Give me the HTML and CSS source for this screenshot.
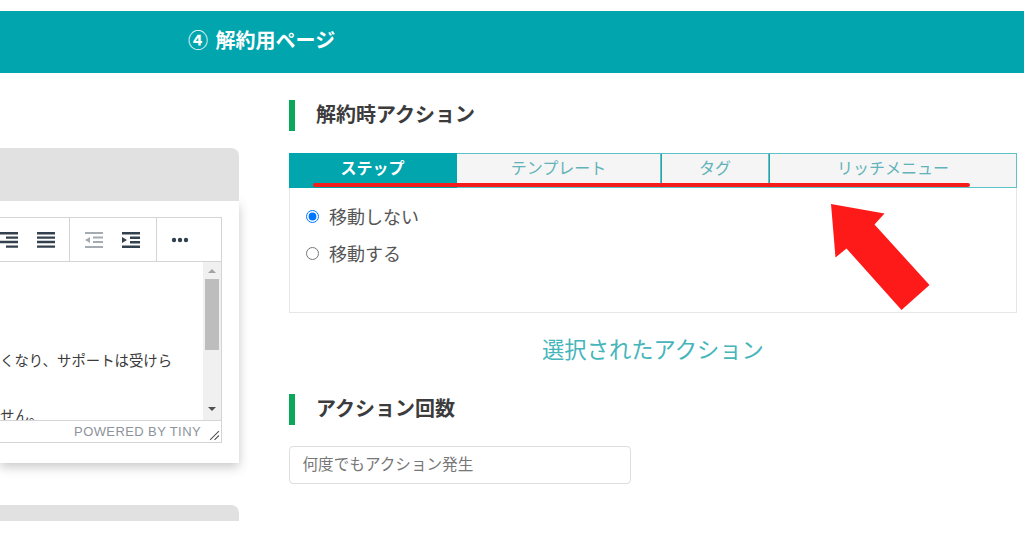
FILE: index.html
```html
<!DOCTYPE html>
<html lang="ja">
<head>
<meta charset="utf-8">
<title>解約用ページ</title>
<link rel="stylesheet" href="styles.css">
</head>
<body>
<header class="banner"><h1 class="banner-title">④ 解約用ページ</h1></header>
<main class="layout">
  <section class="left">
    <div class="card">
      <div class="card-head"></div>
      <div class="card-body">
        <div class="editor">
          <div class="toolbar">
            <div class="tool-group group-align">
              <svg class="icon" viewBox="0 0 18 18"><path d="M-2 1h20v2.400H-2zM6 5.400h12v2.400H6zM-2 9.800h20v2.400H-2zM6 14.400h12v2.400H6z"/></svg>
              <svg class="icon" viewBox="0 0 18 18"><path d="M0 1h18v2.400H0zM0 5.400h18v2.400H0zM0 9.800h18v2.400H0zM0 14.400h18v2.400H0z"/></svg>
            </div>
            <div class="tool-group group-indent">
              <svg class="icon icon-off" viewBox="0 0 18 18"><path d="M0 1h18v2H0zM8 5.500h10v2H8zM8 10h10v2H8zM0 15h18v2H0zM5 6v6L0 9z"/></svg>
              <svg class="icon" viewBox="0 0 18 18"><path d="M0 1h18v2.400H0zM8 5.500h10v2.400H8zM8 10h10v2.400H8zM0 14.600h18v2.400H0zM0 6v6l5-3z"/></svg>
            </div>
            <div class="tool-group group-more">
              <svg class="icon" viewBox="0 0 18 18"><circle cx="3" cy="9" r="2.200"/><circle cx="9" cy="9" r="2.200"/><circle cx="15" cy="9" r="2.200"/></svg>
            </div>
          </div>
          <div class="edit-area">
            <div class="edit-text">
              <p class="line-one">くなり、サポートは受けら</p>
              <p class="line-two">せん。</p>
            </div>
            <div class="scrollbar">
              <span class="arrow-up"></span>
              <span class="thumb"></span>
              <span class="arrow-down"></span>
            </div>
          </div>
          <div class="statusbar">
            <span>POWERED BY TINY</span>
            <svg class="grip" viewBox="0 0 10 10"><path d="M9 1 1 9M9 5 5 9"/></svg>
          </div>
        </div>
      </div>
    </div>
    <div class="card-next"></div>
  </section>
  <section class="right">
    <h2 class="heading">解約時アクション</h2>
    <div class="tabs">
      <div class="tab tab-active">ステップ</div>
      <div class="tab">テンプレート</div>
      <div class="tab">タグ</div>
      <div class="tab">リッチメニュー</div>
      <span class="red-line"></span>
    </div>
    <div class="panel">
      <label class="radio-row"><input type="radio" name="move" checked>移動しない</label>
      <label class="radio-row"><input type="radio" name="move">移動する</label>
      <svg class="red-arrow" viewBox="0 0 100 109"><polygon points="0,0 53.500,9.500 43.500,20.500 98.500,81 70.500,106 15.500,44.500 4.500,53.500"/></svg>
    </div>
    <h3 class="action-title">選択されたアクション</h3>
    <h2 class="heading">アクション回数</h2>
    <div class="select-box">何度でもアクション発生</div>
  </section>
</main>
</body>
</html>
```

FILE: styles.css
```css
* { box-sizing: border-box; }
html, body { margin: 0; height: 538px; overflow: hidden; background: #fff; }
body {
  padding-top: 11px;
  font-family: "Noto Sans CJK JP", "Liberation Sans", sans-serif;
  color: #444;
}
h1, h2, h3, p { margin: 0; }

.banner {
  height: 62px;
  background: #00a5ad;
  display: flex;
  align-items: center;
  padding: 0 0 5px 188px;
}
.banner-title { font-size: 20px; font-weight: 700; color: #fff; line-height: 1; word-spacing: 3px; }

.layout { display: grid; grid-template-columns: 239px 728px; column-gap: 50px; }

/* left column */
.left { padding-top: 75px; }
.card-head { position: relative; height: 53px; background: #e1e1e1; border-radius: 0 8px 0 0; }
.card-body { height: 262px; background: #fff; padding-top: 16px; box-shadow: 0 4px 10px rgba(60, 60, 70, .28); }
.card-next { height: 16px; margin-top: 42px; background: #e1e1e1; border-radius: 0 8px 0 0; }

.editor {
  width: 222px;
  height: 226px;
  border: solid #d4d4d4;
  border-width: 1px 1px 1px 0;
  display: flex;
  flex-direction: column;
}
.toolbar { height: 44px; flex: none; display: flex; justify-content: flex-end; border-bottom: 1px solid #d4d4d4; }
.tool-group { display: flex; align-items: center; gap: 19px; height: 100%; }
.group-align { padding-right: 14px; }
.group-indent { border-left: 1px solid #d4d4d4; padding: 0 16px 0 15px; }
.group-more { border-left: 1px solid #d4d4d4; padding: 0 32px 0 14px; }
.icon { width: 18px; height: 18px; fill: #33414f; flex: none; overflow: visible; }
.icon-off { fill: #a4abb2; }

.edit-area { flex: 1; min-height: 0; display: flex; overflow: hidden; border-bottom: 1px solid #d4d4d4; }
.edit-text { flex: 1; font-size: 14.4px; line-height: 20px; color: #3a3a3a; white-space: nowrap; }
.line-one { margin-top: 88px; }
.line-two { margin-top: 35px; }

.scrollbar { width: 18px; background: #f0f0f0; display: flex; flex-direction: column; align-items: center; flex: none; }
.arrow-up { margin-top: 7px; border: 4px solid transparent; border-top: 0; border-bottom: 4px solid #a3a3a3; }
.thumb { width: 14px; height: 71px; margin-top: 6px; background: #bdbdbd; }
.arrow-down { margin-top: 57px; border: 4px solid transparent; border-bottom: 0; border-top: 4px solid #505050; }

.statusbar {
  height: 21px;
  flex: none;
  display: flex;
  align-items: center;
  justify-content: flex-end;
  gap: 8px;
  padding-right: 1px;
  font-size: 13px;
  letter-spacing: .4px;
  color: #8d939a;
  font-family: "Liberation Sans", sans-serif;
}
.grip { width: 11px; height: 11px; margin-top: 7px; fill: none; stroke: #555; stroke-width: 1; }

/* right column */
.right { padding-top: 27px; }
.heading {
  height: 31px;
  border-left: 6px solid #0aa75a;
  padding-left: 21px;
  font-size: 20px;
  line-height: 27px;
  font-weight: 700;
  color: #3c3c3c;
}
.tabs {
  position: relative;
  margin-top: 22px;
  height: 35px;
  display: grid;
  grid-template-columns: 168px 204px 108px 248px;
}
.tab {
  background: #f5f5f5;
  border: 1px solid #5cc3c8;
  border-left: 0;
  text-align: center;
  font-size: 16px;
  line-height: 26px;
  color: #62b3b9;
}
.tab:nth-child(3), .tab:nth-child(4) { border-left: 1.5px solid #2aa0a8; }
.tab-active { background: #00a5ad; border-color: #00a5ad; color: #fff; font-weight: 700; }
.red-line {
  position: absolute;
  left: 24px;
  right: 47px;
  top: 30px;
  height: 4px;
  background: #f51c1c;
  border-radius: 2px;
}

.panel {
  position: relative;
  height: 125px;
  border: 1px solid #e6e6e6;
  border-top: 0;
  padding: 10px 16px 0;
}
.radio-row {
  display: flex;
  align-items: center;
  gap: 10px;
  height: 37px;
  font-size: 18px;
  line-height: 33px;
  padding-bottom: 1px;
  color: #555;
}
.radio-row input { margin: 1px 0 0; width: 13px; height: 13px; flex: none; }
.red-arrow { position: absolute; left: 541px; top: 16px; width: 100px; height: 109px; fill: #ff1a1a; }

.action-title {
  margin: 18px 0 27px;
  height: 36px;
  text-align: center;
  font-size: 22.3px;
  font-weight: 400;
  line-height: 34px;
  color: #45b5bb;
}

.select-box {
  margin-top: 21px;
  width: 342px;
  height: 38px;
  border: 1.5px solid #dedede;
  border-radius: 4px;
  padding-left: 12.5px;
  font-size: 15.6px;
  line-height: 32px;
  color: #777;
}
```
